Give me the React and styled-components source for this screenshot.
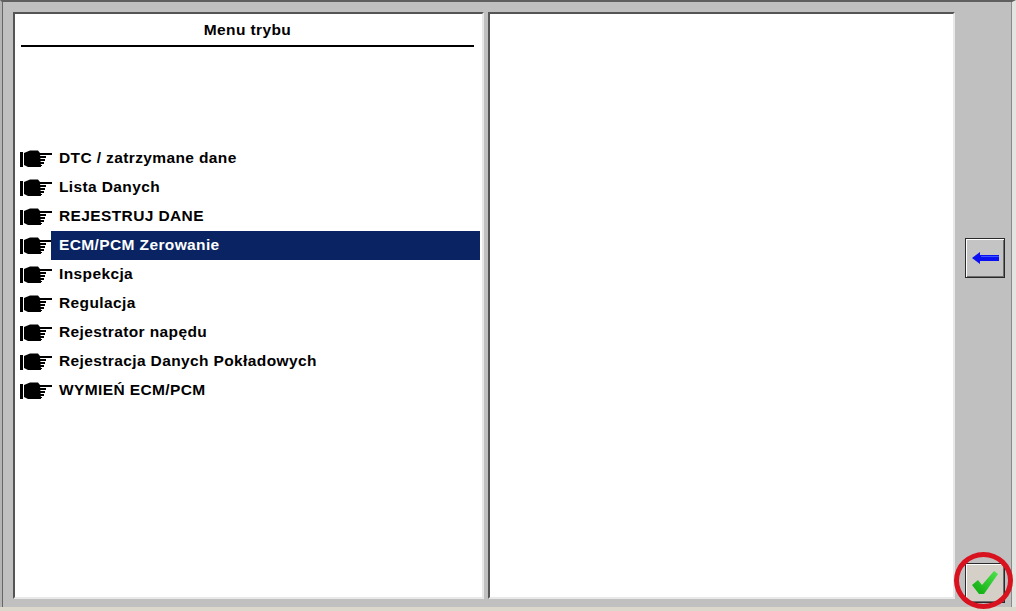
import styled, { createGlobalStyle } from "styled-components";

const GlobalStyle = createGlobalStyle`
  html, body {
    margin: 0;
    padding: 0;
    background: #c0c0c0;
  }
`;

const MENU_ITEMS = [
  "DTC / zatrzymane dane",
  "Lista Danych",
  "REJESTRUJ DANE",
  "ECM/PCM Zerowanie",
  "Inspekcja",
  "Regulacja",
  "Rejestrator napędu",
  "Rejestracja Danych Pokładowych",
  "WYMIEŃ ECM/PCM",
];

const HandIcon = () => (
  <svg width="32" height="18" viewBox="0 0 32 18">
    <rect x="0" y="2" width="3" height="15" fill="#000" />
    <path d="M4 3 L10 0.5 L18 0.5 L20 3 L21 17 L8 17 L4 15 Z" fill="#000" />
    <rect x="19" y="3" width="13" height="2" fill="#000" />
    <rect x="19" y="6" width="7" height="2" fill="#000" />
    <rect x="19" y="9" width="6" height="2" fill="#000" />
    <rect x="19" y="12" width="5" height="2" fill="#000" />
    <rect x="19" y="15" width="3" height="1" fill="#000" />
  </svg>
);

const BackIcon = () => (
  <svg width="27" height="12" viewBox="0 0 27 12">
    <path d="M0 6 L8 0 L8 3 L27 3 L27 9 L8 9 L8 12 Z" fill="#0a10f0" />
    <rect x="9" y="4" width="18" height="1" fill="#3a58ff" />
  </svg>
);

const CheckIcon = () => (
  <svg width="26" height="24" viewBox="0 0 26 24">
    <defs>
      <linearGradient id="tick" x1="1" y1="0" x2="0" y2="1">
        <stop offset="0" stopColor="#4fe24f" />
        <stop offset="1" stopColor="#0aa80a" />
      </linearGradient>
    </defs>
    <path d="M0 14 L6 9 L10 14 L22 0 L26 3 L12 23 L7 23 Z" fill="url(#tick)" />
  </svg>
);

const App = () => {
  return (
    <Screen>
      <GlobalStyle />
      <Frame>
        <Panel $width={471}>
          <Title>Menu trybu</Title>
          <MenuList>
            {MENU_ITEMS.map((item) => (
              <MenuRow key={item}>
                <HandIcon />
                <MenuLabel $active={item === "ECM/PCM Zerowanie"}>{item}</MenuLabel>
              </MenuRow>
            ))}
          </MenuList>
        </Panel>
        <Panel $width={467} />
        <SideBar>
          <SquareButton $top={226}>
            <BackIcon />
          </SquareButton>
          <OkWrap>
            <SquareButton $light>
              <CheckIcon />
            </SquareButton>
            <RedRing />
          </OkWrap>
        </SideBar>
      </Frame>
    </Screen>
  );
};

export default App;

const Screen = styled.div`
  width: 1016px;
  height: 611px;
  overflow: hidden;
  background: #dcd8cc;
  font-family: "Liberation Sans", Arial, sans-serif;
`;

const Frame = styled.div`
  box-sizing: border-box;
  width: 1016px;
  height: 607px;
  padding: 10px 0 8px 11px;
  display: flex;
  gap: 4px;
  background: #c0c0c0;
  border-top: 2px solid #5f5f5f;
  border-left: 2px solid #b4b4b4;
  border-right: 4px solid #e4e4e0;
  box-shadow: inset -1px 0 0 #8a8a8a, inset 1px 0 0 #666;
`;

const Panel = styled.div`
  box-sizing: border-box;
  width: ${(p) => p.$width}px;
  height: 587px;
  background: #fff;
  border-top: 2px solid #555;
  border-left: 2px solid #555;
  border-right: 2px solid #e8e8e8;
  border-bottom: 2px solid #e8e8e8;
`;

const Title = styled.div`
  box-sizing: border-box;
  width: 453px;
  height: 33px;
  margin-left: 6px;
  padding-top: 8px;
  text-align: center;
  font-size: 15.5px;
  font-weight: 700;
  letter-spacing: 0.38px;
  line-height: 16px;
  color: #000;
  border-bottom: 2px solid #000;
`;

const MenuList = styled.div`
  margin-top: 97px;
  display: flex;
  flex-direction: column;
`;

const MenuRow = styled.div`
  height: 29px;
  padding-left: 5px;
  display: flex;
  align-items: center;
`;

const MenuLabel = styled.div`
  box-sizing: border-box;
  width: 429px;
  height: 29px;
  margin-left: -1px;
  padding-left: 8px;
  line-height: 27px;
  font-size: 15.5px;
  font-weight: 700;
  letter-spacing: 0.38px;
  white-space: nowrap;
  color: ${(p) => (p.$active ? "#fff" : "#000")};
  background: ${(p) => (p.$active ? "#0a2463" : "transparent")};
`;

const SideBar = styled.div`
  width: 52px;
  display: flex;
  flex-direction: column;
  align-items: center;
`;

const SquareButton = styled.div`
  box-sizing: border-box;
  width: 40px;
  height: 40px;
  margin-top: ${(p) => p.$top || 0}px;
  display: flex;
  align-items: center;
  justify-content: center;
  background: ${(p) => (p.$light ? "#d4d0c8" : "#c4c4c4")};
  border: 1px solid #2a2a2a;
  box-shadow: inset 1px 1px 0 #fff, inset -1px -1px 0 #6e6e6e;
`;

const OkWrap = styled.div`
  position: relative;
  margin-top: auto;
  margin-bottom: -4px;
`;

const RedRing = styled.div`
  position: absolute;
  left: -11px;
  top: -11px;
  width: 59px;
  height: 57px;
  box-sizing: border-box;
  border: 5px solid #d8121e;
  border-radius: 50%;
`;
